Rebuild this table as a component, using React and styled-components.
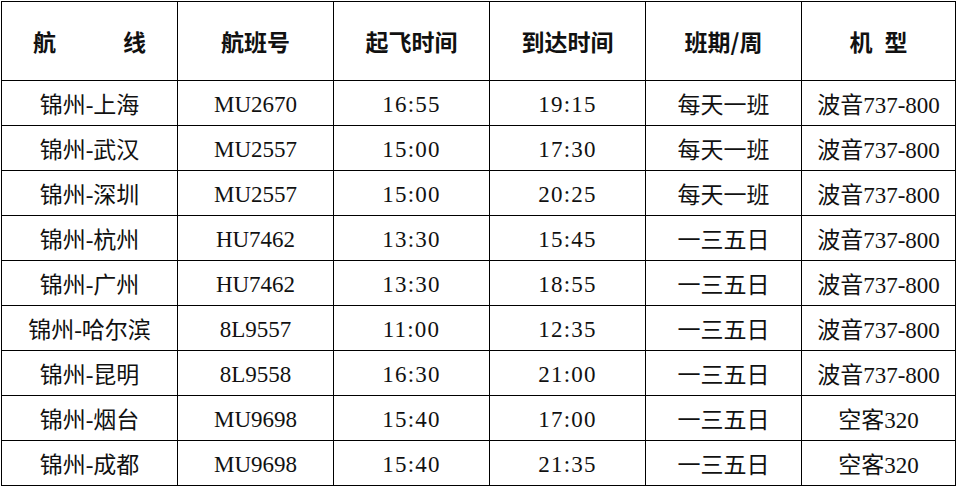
import styled, { createGlobalStyle } from 'styled-components'

const GlobalStyle = createGlobalStyle`
  html, body {
    margin: 0;
    padding: 0;
    background: #ffffff;
  }
`

const COLS = [176, 156, 156, 156, 156, 154]

// which columns hold only latin text (flight no. and times)
const LATIN = [false, true, true, true, false, false]
const TIME = [false, false, true, true, false, false]

const flights = [
  ['锦州-上海', 'MU2670', '16:55', '19:15', '每天一班', '波音737-800'],
  ['锦州-武汉', 'MU2557', '15:00', '17:30', '每天一班', '波音737-800'],
  ['锦州-深圳', 'MU2557', '15:00', '20:25', '每天一班', '波音737-800'],
  ['锦州-杭州', 'HU7462', '13:30', '15:45', '一三五日', '波音737-800'],
  ['锦州-广州', 'HU7462', '13:30', '18:55', '一三五日', '波音737-800'],
  ['锦州-哈尔滨', '8L9557', '11:00', '12:35', '一三五日', '波音737-800'],
  ['锦州-昆明', '8L9558', '16:30', '21:00', '一三五日', '波音737-800'],
  ['锦州-烟台', 'MU9698', '15:40', '17:00', '一三五日', '空客320'],
  ['锦州-成都', 'MU9698', '15:40', '21:35', '一三五日', '空客320'],
]

const Page = styled.div`
  padding: 1px 0 0 1px;
`

const Table = styled.table`
  border-collapse: collapse;
  table-layout: fixed;
  width: 955px;
  font-family: 'Liberation Serif', 'Noto Sans CJK SC', serif;
  color: #111;
`

const HeadCell = styled.th`
  height: 78px;
  padding: 0;
  border: 1px solid #000;
  font-family: 'Noto Sans CJK SC', sans-serif;
  font-size: 23px;
  font-weight: 700;
  text-align: center;
  vertical-align: middle;
`

/* Spaced header words like 航　线 / 机 型 */
const Spread = styled.span`
  display: inline-flex;
  gap: ${props => props.$gap}px;
`

const Cell = styled.td`
  height: ${props => (props.$latin ? 41 : 44)}px;
  padding: ${props => (props.$latin ? '3px 0 0' : '0')};
  border: 1px solid #000;
  font-size: 23px;
  font-weight: 400;
  letter-spacing: ${props => (props.$time ? '1.2px' : '0')};
  text-align: center;
  vertical-align: middle;
  white-space: nowrap;
`

const App = () => (
  <Page>
    <GlobalStyle />
    <Table>
      <colgroup>
        {COLS.map((w, i) => (
          <col key={i} style={{ width: w }} />
        ))}
      </colgroup>
      <thead>
        <tr>
          <HeadCell>
            <Spread $gap={67}>
              <span>航</span>
              <span>线</span>
            </Spread>
          </HeadCell>
          <HeadCell>航班号</HeadCell>
          <HeadCell>起飞时间</HeadCell>
          <HeadCell>到达时间</HeadCell>
          <HeadCell>班期/周</HeadCell>
          <HeadCell>
            <Spread $gap={12}>
              <span>机</span>
              <span>型</span>
            </Spread>
          </HeadCell>
        </tr>
      </thead>
      <tbody>
        {flights.map(row => (
          <tr key={row[0]}>
            {row.map((v, i) => (
              <Cell key={i} $latin={LATIN[i]} $time={TIME[i]}>
                {v}
              </Cell>
            ))}
          </tr>
        ))}
      </tbody>
    </Table>
  </Page>
)

export default App
